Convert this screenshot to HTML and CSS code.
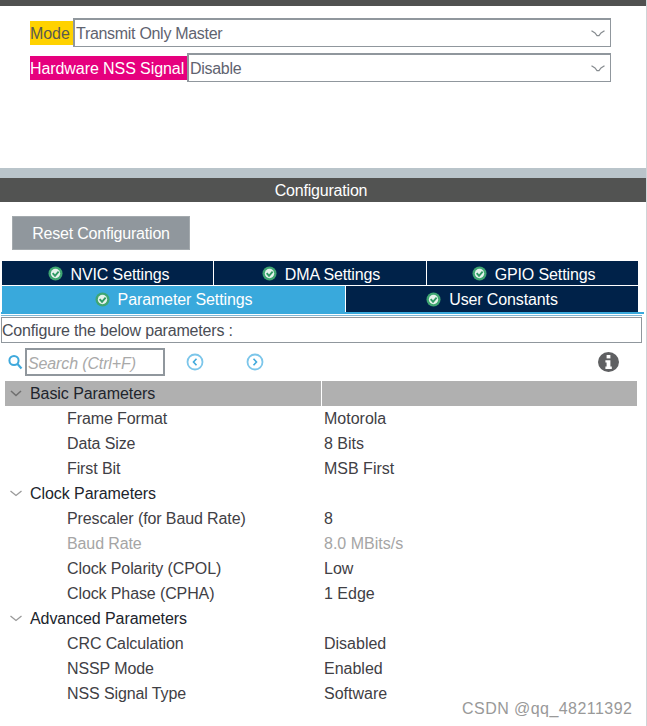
FILE: index.html
```html
<!DOCTYPE html>
<html lang="en">
<head>
<meta charset="utf-8">
<title>SPI Configuration</title>
<link rel="stylesheet" href="styles.css">
</head>
<body>
<div class="page">
  <div class="topbar"></div>
  <section class="mode">
    <div class="mode-row">
      <span class="tag tag-yellow">Mode</span>
      <div class="select"><span class="sel-text">Transmit Only Master</span>
        <svg class="chev" width="14" height="7" viewBox="0 0 14 7"><path d="M0.5 0.8 L4 3 L6 5.6 H8 L10 3 L13.5 0.8" fill="none" stroke="#868b8f" stroke-width="1.2"/></svg>
      </div>
    </div>
    <div class="mode-row">
      <span class="tag tag-pink">Hardware NSS Signal</span>
      <div class="select"><span class="sel-text">Disable</span>
        <svg class="chev" width="14" height="7" viewBox="0 0 14 7"><path d="M0.5 0.8 L4 3 L6 5.6 H8 L10 3 L13.5 0.8" fill="none" stroke="#868b8f" stroke-width="1.2"/></svg>
      </div>
    </div>
  </section>
  <div class="strip"></div>
  <h2 class="config-title">Configuration</h2>
  <div class="btn-wrap"><button class="reset">Reset Configuration</button></div>
  <div class="tabs">
    <div class="tab-row three">
      <div class="tab"><svg class="ok" viewBox="0 0 16 16"><circle cx="8" cy="8" r="7.5" fill="#3fa672"/><circle cx="8" cy="8" r="5" fill="#e6f3ec"/><path d="M5 7.5 L7.5 10.5 L11.3 6" fill="none" stroke="#2f9a64" stroke-width="2"/></svg><span class="tab-text">NVIC Settings</span></div>
      <div class="tab"><svg class="ok" viewBox="0 0 16 16"><circle cx="8" cy="8" r="7.5" fill="#3fa672"/><circle cx="8" cy="8" r="5" fill="#e6f3ec"/><path d="M5 7.5 L7.5 10.5 L11.3 6" fill="none" stroke="#2f9a64" stroke-width="2"/></svg><span class="tab-text">DMA Settings</span></div>
      <div class="tab"><svg class="ok" viewBox="0 0 16 16"><circle cx="8" cy="8" r="7.5" fill="#3fa672"/><circle cx="8" cy="8" r="5" fill="#e6f3ec"/><path d="M5 7.5 L7.5 10.5 L11.3 6" fill="none" stroke="#2f9a64" stroke-width="2"/></svg><span class="tab-text">GPIO Settings</span></div>
    </div>
    <div class="tab-row two">
      <div class="tab active"><svg class="ok" viewBox="0 0 16 16"><circle cx="8" cy="8" r="7.5" fill="#3fa672"/><circle cx="8" cy="8" r="5" fill="#e6f3ec"/><path d="M5 7.5 L7.5 10.5 L11.3 6" fill="none" stroke="#2f9a64" stroke-width="2"/></svg><span class="tab-text">Parameter Settings</span></div>
      <div class="tab"><svg class="ok" viewBox="0 0 16 16"><circle cx="8" cy="8" r="7.5" fill="#3fa672"/><circle cx="8" cy="8" r="5" fill="#e6f3ec"/><path d="M5 7.5 L7.5 10.5 L11.3 6" fill="none" stroke="#2f9a64" stroke-width="2"/></svg><span class="tab-text">User Constants</span></div>
    </div>
  </div>
  <div class="tab-rule"></div>
  <div class="tab-rule-thin"></div>
  <div class="hint">Configure the below parameters :</div>
  <div class="toolbar">
    <svg class="search-icon" width="15" height="16" viewBox="0 0 15 16"><circle cx="6" cy="6.5" r="4.6" fill="none" stroke="#3fa9dc" stroke-width="2"/><path d="M9.5 10 L13.5 14.5" stroke="#3fa9dc" stroke-width="2.2"/></svg>
    <div class="search">Search (Ctrl+F)</div>
    <svg class="nav nav-prev" width="18" height="18" viewBox="0 0 18 18"><circle cx="9" cy="9" r="7.5" fill="none" stroke="#7cc6ea" stroke-width="1.8"/><path d="M10.5 5.8 L7.5 9 L10.5 12.2" fill="none" stroke="#3fa9dc" stroke-width="1.6"/></svg>
    <svg class="nav nav-next" width="18" height="18" viewBox="0 0 18 18"><circle cx="9" cy="9" r="7.5" fill="none" stroke="#7cc6ea" stroke-width="1.8"/><path d="M7.5 5.8 L10.5 9 L7.5 12.2" fill="none" stroke="#3fa9dc" stroke-width="1.6"/></svg>
    <svg class="info" width="21" height="20" viewBox="0 0 21 20"><ellipse cx="10.5" cy="10" rx="10.5" ry="10" fill="#5f6062"/><rect x="8.6" y="3" width="3.8" height="3.4" fill="#fff"/><path d="M7.4 8.2 H12.4 V14.6 H13.8 V17 H7.4 V14.6 H8.6 V10.4 H7.4 Z" fill="#fff"/></svg>
  </div>
  <div class="params">
    <div class="group head"><svg class="tree" width="14" height="7" viewBox="0 0 14 7"><path d="M2 1 L7 5.5 L12 1" fill="none" stroke="#707070" stroke-width="1.6"/></svg><span class="gname">Basic Parameters</span></div>
    <div class="row"><span class="k">Frame Format</span><span>Motorola</span></div>
    <div class="row"><span class="k">Data Size</span><span>8 Bits</span></div>
    <div class="row"><span class="k">First Bit</span><span>MSB First</span></div>
    <div class="group"><svg class="tree" width="14" height="7" viewBox="0 0 14 7"><path d="M1.5 1 L7 5.5 L12.5 1" fill="none" stroke="#999" stroke-width="1.3"/></svg><span class="gname">Clock Parameters</span></div>
    <div class="row"><span class="k">Prescaler (for Baud Rate)</span><span>8</span></div>
    <div class="row muted"><span class="k">Baud Rate</span><span>8.0 MBits/s</span></div>
    <div class="row"><span class="k">Clock Polarity (CPOL)</span><span>Low</span></div>
    <div class="row"><span class="k">Clock Phase (CPHA)</span><span>1 Edge</span></div>
    <div class="group"><svg class="tree" width="14" height="7" viewBox="0 0 14 7"><path d="M1.5 1 L7 5.5 L12.5 1" fill="none" stroke="#999" stroke-width="1.3"/></svg><span class="gname">Advanced Parameters</span></div>
    <div class="row"><span class="k">CRC Calculation</span><span>Disabled</span></div>
    <div class="row"><span class="k">NSSP Mode</span><span>Enabled</span></div>
    <div class="row"><span class="k">NSS Signal Type</span><span>Software</span></div>
  </div>
  <div class="watermark">CSDN @qq_48211392</div>
</div>
</body>
</html>
```
FILE: styles.css
```css
html, body { margin: 0; padding: 0; background: #fff; }
.page {
  position: relative;
  width: 646px;
  height: 726px;
  overflow: hidden;
  border-right: 1px solid #cfd4d7;
  font: 16px "Liberation Sans", Arial, sans-serif;
  color: #3a3a3c;
}
.topbar { height: 6px; background: #505150; }
.mode { height: 162px; padding: 12px 35px 0 30px; box-sizing: border-box; display: flex; flex-direction: column; gap: 6px; }
.mode-row { display: flex; align-items: center; height: 29px; }
.tag { display: flex; align-items: center; height: 24px; margin-top: 1px; padding: 2px 0 0; white-space: nowrap; color: #5a5a50; letter-spacing: -0.08px; }
.tag-yellow { background: #ffd200; width: 43px; box-sizing: border-box; }
.tag-pink { background: #e6007e; color: #fff; width: 157px; box-sizing: border-box; }
.select {
  flex: 1;
  height: 29px;
  box-sizing: border-box;
  border: 2px solid #90979d;
  border-right-width: 1px;
  border-bottom-width: 1px;
  padding-left: 1px;
  display: flex;
  align-items: center;
  justify-content: space-between;
  color: #5f6370;
}
.sel-text { padding-top: 2px; letter-spacing: -0.3px; }
.chev { margin-right: 5px; }
.strip { height: 10px; background: #b9c4ca; }
.config-title { margin: 0; height: 24px; box-sizing: border-box; padding: 2px 4px 0 0; line-height: 22px; background: #525352; color: #fff; font-size: 16px; font-weight: normal; text-align: center; letter-spacing: -0.2px; }
.btn-wrap { padding: 14px 0 11px 12px; }
.reset { display: block; width: 178px; height: 34px; padding: 2px 0 0; border: 1px solid #a4aaae; background: #90979d; color: #fff; font: inherit; letter-spacing: -0.2px; }
.tabs { margin-left: 2px; width: 636px; display: flex; flex-direction: column; }
.tab-row { display: grid; }
.three { grid-template-columns: 212px 213px 211px; height: 25px; }
.three .tab { padding-left: 2px; }
.two { grid-template-columns: 344px 292px; height: 26px; }
.tab { display: flex; align-items: center; justify-content: center; gap: 8px; background: #002249; color: #fff; box-sizing: border-box; border-right: 1px solid #fff; border-bottom: 1px solid #fff; letter-spacing: -0.12px; }
.tab:last-child { border-right: 0; }
.two .tab { border-bottom: 0; }
.tab.active { background: #39a9dc; border-right-color: #fff; }
.tab-text { padding-top: 3px; }
.two .tab-text { padding-top: 2px; }
.ok { width: 15px; height: 15px; }
.tab-rule { height: 2px; margin: 0 2px 0 1px; background: #39a9dc; }
.tab-rule-thin { height: 1px; margin: 1px 4px 0 1px; background: #7fb8d6; }
.hint { margin: 1px 4px 0 1px; height: 26px; line-height: 25px; box-sizing: border-box; border: 1px solid #90979d; color: #4a4d55; letter-spacing: -0.18px; }
.toolbar { position: relative; height: 38px; display: flex; align-items: center; padding-left: 8px; }
.search-icon { margin-right: 2px; }
.search { width: 140px; height: 28px; box-sizing: border-box; border: 2px solid #90979d; padding: 2px 0 0 1px; line-height: 24px; color: #a9a9a9; font-style: italic; letter-spacing: -0.13px; }
.nav-prev { margin-left: 21px; }
.nav-next { margin-left: 42px; }
.info { margin-left: 334px; }
.params { margin-left: 5px; width: 632px; }
.group, .row { height: 25px; display: flex; align-items: center; }
.group { color: #20242c; }
.head { background: linear-gradient(to right, #b0b0b0 316px, #fff 316px, #fff 317px, #b0b0b0 317px); }
.tree { margin-left: 4px; margin-right: 7px; }
.gname { letter-spacing: -0.07px; }
.row { padding-left: 62px; color: #3f4045; }
.k { width: 257px; letter-spacing: -0.11px; }
.muted { color: #a5a5a5; }
.watermark { position: absolute; left: 462px; top: 700px; color: #999; font-size: 16px; letter-spacing: 0.45px; }
```
